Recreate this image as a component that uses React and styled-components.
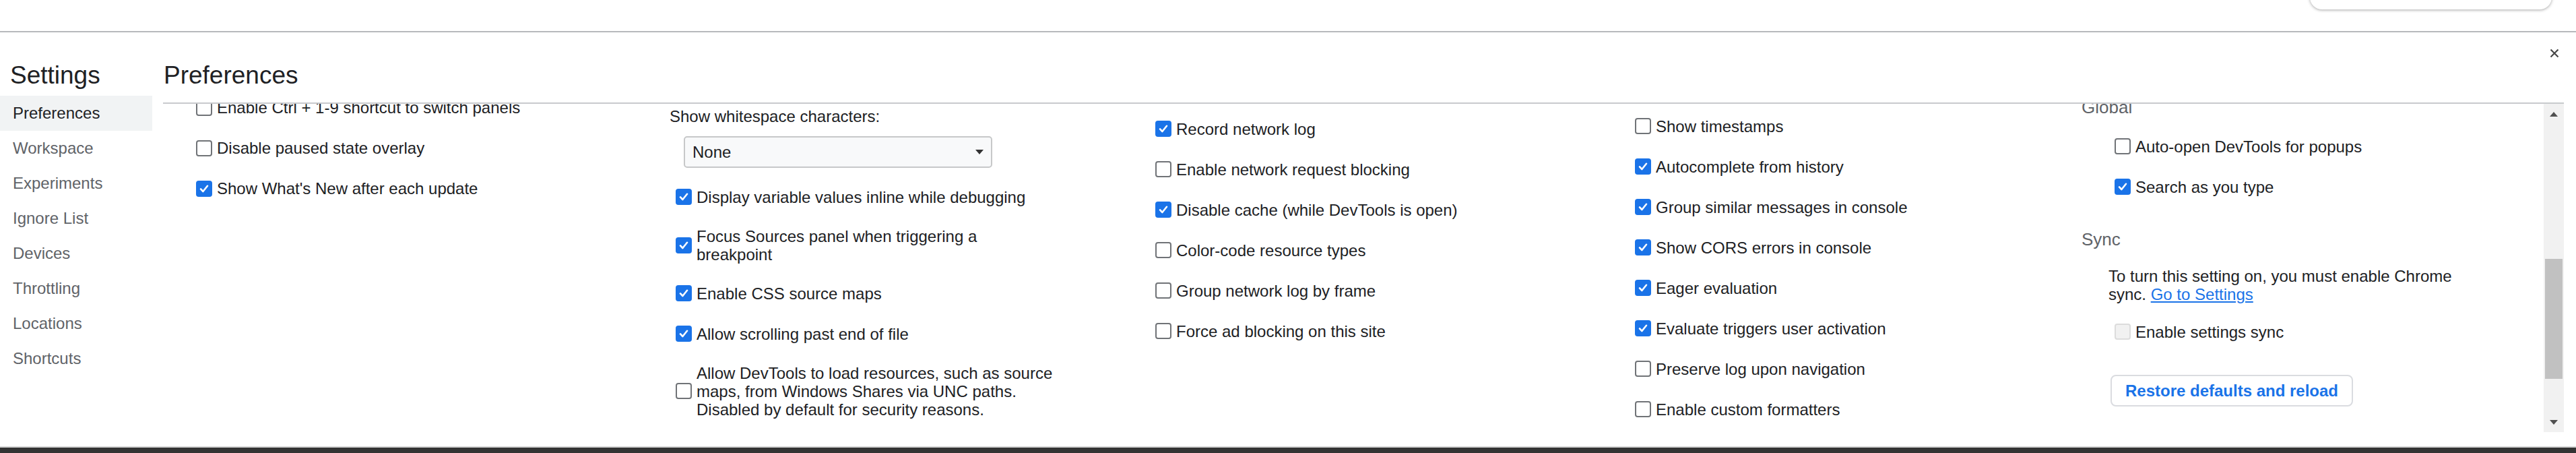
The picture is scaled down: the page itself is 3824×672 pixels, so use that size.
import React from 'react';
import styled, { createGlobalStyle } from 'styled-components';

const GlobalStyle = createGlobalStyle`
  html, body {
    margin: 0;
    padding: 0;
    background: #fff;
  }
  body {
    font-family: "Liberation Sans", Arial, sans-serif;
    color: #202124;
  }
`;

const Page = styled.div`
  width: 3824px;
  height: 672px;
  display: flex;
  flex-direction: column;
  overflow: hidden;
  background: #fff;
`;

const TopStrip = styled.div`
  height: 46px;
  flex: none;
  border-bottom: 2px solid #b7b9bc;
  display: flex;
  justify-content: flex-end;
  padding-right: 36px;
  overflow: hidden;
`;

const SearchStub = styled.div`
  width: 359px;
  height: 40px;
  margin-top: -26px;
  border-radius: 18px;
  background: #fff;
  box-shadow: 0 1px 4px rgba(0, 0, 0, 0.35);
`;

const Dialog = styled.div`
  flex: 1;
  display: flex;
  min-height: 0;
  padding-right: 18px;
  border-bottom: 2px solid #d3d3d3;
`;

const DarkBar = styled.div`
  height: 8px;
  flex: none;
  background: #333;
`;

const Sidebar = styled.nav`
  width: 226px;
  flex: none;
  margin-right: 16px;
`;

const SidebarTitle = styled.div`
  height: 94px;
  box-sizing: border-box;
  padding: 45px 0 0 15px;
  font-size: 37px;
  line-height: 37px;
  color: #202124;
`;

const NavItem = styled.div`
  height: 52px;
  line-height: 52px;
  padding-left: 19px;
  font-size: 24px;
  color: ${(p) => (p.$active ? '#202124' : '#5f6368')};
  background: ${(p) => (p.$active ? '#f1f3f4' : 'transparent')};
`;

const Main = styled.div`
  flex: 1;
  min-width: 0;
  display: flex;
  flex-direction: column;
`;

const MainHeader = styled.div`
  height: 104px;
  flex: none;
  display: flex;
  justify-content: space-between;
  align-items: flex-start;
`;

const MainTitle = styled.h1`
  margin: 0;
  padding: 45px 0 0 1px;
  font-size: 37px;
  line-height: 37px;
  font-weight: 400;
  color: #202124;
`;

const CloseButton = styled.div`
  width: 28px;
  height: 28px;
  margin-top: 17px;
  display: flex;
  align-items: center;
  justify-content: center;
`;

const Panel = styled.div`
  height: 489px;
  flex: none;
  box-sizing: border-box;
  border-top: 2px solid #c8cacd;
  display: flex;
  overflow: hidden;
`;

const Columns = styled.div`
  flex: 1;
  min-width: 0;
  display: grid;
  grid-template-columns: repeat(4, 712px) 1fr;
  align-items: start;
  overflow: hidden;
`;

const Column = styled.div`
  display: flex;
  flex-direction: column;
  padding-left: 40px;
  margin-top: ${(p) => p.$top}px;
  gap: ${(p) => (p.$gap === undefined ? 29 : p.$gap)}px;
`;

const List = styled.div`
  display: flex;
  flex-direction: column;
  gap: 29px;
  margin-top: ${(p) => p.$mt || 0}px;
`;

const Row = styled.label`
  display: flex;
  align-items: center;
  min-height: 31px;
  font-size: 24px;
  line-height: 27px;
  color: #202124;
  white-space: nowrap;
`;

const Box = styled.span`
  width: 24px;
  height: 24px;
  flex: none;
  box-sizing: border-box;
  margin: 0 7px 0 9px;
  border-radius: 4px;
  display: flex;
  align-items: center;
  justify-content: center;
  background: ${(p) => (p.$checked ? '#1a73e8' : p.$disabled ? '#f1f1f1' : '#fff')};
  border: ${(p) => (p.$checked ? 'none' : p.$disabled ? '2px solid #dcdcdc' : '2px solid #707377')};
`;

const FieldLabel = styled.div`
  font-size: 24px;
  line-height: 27px;
  margin-top: 4.5px;
  margin-bottom: 16.5px;
  white-space: nowrap;
`;

const Select = styled.div`
  width: 458px;
  height: 47px;
  box-sizing: border-box;
  margin-left: 21px;
  padding: 0 11px;
  border: 2px solid #c7c8c9;
  border-radius: 5px;
  background: #f8f9fa;
  display: flex;
  align-items: center;
  justify-content: space-between;
  font-size: 24px;
`;

const SectionTitle = styled.div`
  margin: ${(p) => p.$mt || 0}px 0 0 -40px;
  font-size: 26px;
  line-height: 30px;
  color: #5f6368;
`;

const Note = styled.p`
  margin: 26px 0 0;
  font-size: 24px;
  line-height: 27px;
  white-space: nowrap;
`;

const Link = styled.a`
  color: #1a73e8;
  text-decoration: underline;
`;

const RestoreButton = styled.div`
  width: 360px;
  height: 47px;
  box-sizing: border-box;
  margin: 48.5px 0 0 3px;
  border: 2px solid #dadce0;
  border-radius: 8px;
  display: flex;
  align-items: center;
  justify-content: center;
  font-size: 24px;
  font-weight: 700;
  color: #1a73e8;
`;

const Scrollbar = styled.div`
  width: 30px;
  flex: none;
  background: #f1f1f1;
  display: flex;
  flex-direction: column;
`;

const ScrollArrow = styled.div`
  height: 30px;
  flex: none;
  display: flex;
  align-items: center;
  justify-content: center;
`;

const ScrollTrack = styled.div`
  flex: 1;
  display: flex;
  flex-direction: column;
`;

const Thumb = styled.div`
  height: 178px;
  margin: 200px 2px 0;
  background: #c1c1c1;
`;

const Check = () => (
  <svg width="16" height="16" viewBox="0 0 16 16">
    <path d="M3 8.4 L6.4 12 L13 3.8" fill="none" stroke="#fff" strokeWidth="2.6" strokeLinecap="round" strokeLinejoin="round" />
  </svg>
);

const Setting = ({ checked, disabled, children }) => (
  <Row>
    <Box $checked={checked} $disabled={disabled}>{checked && <Check />}</Box>
    <span>{children}</span>
  </Row>
);

const nav = ['Preferences', 'Workspace', 'Experiments', 'Ignore List', 'Devices', 'Throttling', 'Locations', 'Shortcuts'];

const network = [
  ['Record network log', true],
  ['Enable network request blocking', false],
  ['Disable cache (while DevTools is open)', true],
  ['Color-code resource types', false],
  ['Group network log by frame', false],
  ['Force ad blocking on this site', false],
];

const consoleSettings = [
  ['Show timestamps', false],
  ['Autocomplete from history', true],
  ['Group similar messages in console', true],
  ['Show CORS errors in console', true],
  ['Eager evaluation', true],
  ['Evaluate triggers user activation', true],
  ['Preserve log upon navigation', false],
  ['Enable custom formatters', false],
];

export default function App() {
  return (
    <Page>
      <GlobalStyle />
      <TopStrip>
        <SearchStub />
      </TopStrip>
      <Dialog>
        <Sidebar>
          <SidebarTitle>Settings</SidebarTitle>
          {nav.map((n, i) => (
            <NavItem key={n} $active={i === 0}>{n}</NavItem>
          ))}
        </Sidebar>
        <Main>
          <MainHeader>
            <MainTitle>Preferences</MainTitle>
            <CloseButton>
              <svg width="14" height="14" viewBox="0 0 14 14">
                <path d="M1.5 1.5 L12.5 12.5 M12.5 1.5 L1.5 12.5" stroke="#474747" strokeWidth="2.2" />
              </svg>
            </CloseButton>
          </MainHeader>
          <Panel>
            <Columns>
              <Column $top={-10}>
                <Setting>Enable Ctrl + 1-9 shortcut to switch panels</Setting>
                <Setting>Disable paused state overlay</Setting>
                <Setting checked>Show What's New after each update</Setting>
              </Column>
              <Column $top={0} $gap={0}>
                <FieldLabel>Show whitespace characters:</FieldLabel>
                <Select>
                  <span>None</span>
                  <svg width="12" height="7" viewBox="0 0 12 7">
                    <path d="M0 0 H12 L6 7 Z" fill="#333" />
                  </svg>
                </Select>
                <List $mt={27.5}>
                  <Setting checked>Display variable values inline while debugging</Setting>
                  <Setting checked>
                    Focus Sources panel when triggering a<br />breakpoint
                  </Setting>
                  <Setting checked>Enable CSS source maps</Setting>
                  <Setting checked>Allow scrolling past end of file</Setting>
                  <Setting>
                    Allow DevTools to load resources, such as source
                    <br />
                    maps, from Windows Shares via UNC paths.
                    <br />
                    Disabled by default for security reasons.
                  </Setting>
                </List>
              </Column>
              <Column $top={21.5}>
                {network.map(([t, c]) => (
                  <Setting key={t} checked={c}>{t}</Setting>
                ))}
              </Column>
              <Column $top={17.5}>
                {consoleSettings.map(([t, c]) => (
                  <Setting key={t} checked={c}>{t}</Setting>
                ))}
              </Column>
              <Column $top={-10.5} $gap={0}>
                <SectionTitle>Global</SectionTitle>
                <List $mt={28}>
                  <Setting>Auto-open DevTools for popups</Setting>
                  <Setting checked>Search as you type</Setting>
                </List>
                <SectionTitle $mt={47}>Sync</SectionTitle>
                <Note>
                  To turn this setting on, you must enable Chrome
                  <br />
                  sync. <Link>Go to Settings</Link>
                </Note>
                <List $mt={27}>
                  <Setting disabled>Enable settings sync</Setting>
                </List>
                <RestoreButton>Restore defaults and reload</RestoreButton>
              </Column>
            </Columns>
            <Scrollbar>
              <ScrollArrow>
                <svg width="12" height="7" viewBox="0 0 12 7">
                  <path d="M0 7 H12 L6 0 Z" fill="#505050" />
                </svg>
              </ScrollArrow>
              <ScrollTrack>
                <Thumb />
              </ScrollTrack>
              <ScrollArrow>
                <svg width="12" height="7" viewBox="0 0 12 7">
                  <path d="M0 0 H12 L6 7 Z" fill="#505050" />
                </svg>
              </ScrollArrow>
            </Scrollbar>
          </Panel>
        </Main>
      </Dialog>
      <DarkBar />
    </Page>
  );
}
